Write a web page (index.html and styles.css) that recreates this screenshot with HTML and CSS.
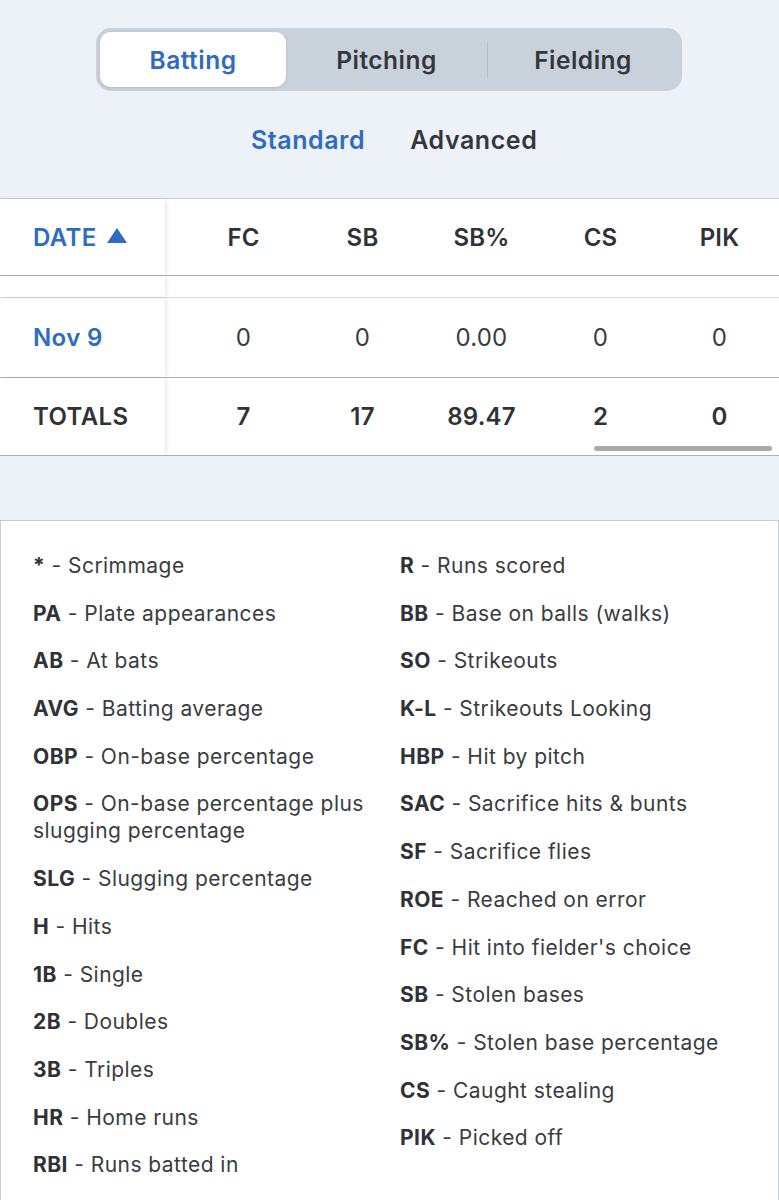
FILE: index.html
```html
<!DOCTYPE html>
<html>
<head>
<meta charset="utf-8">
<link rel="stylesheet" href="styles.css">
</head>
<body>
<div class="top">
  <div class="seg">
    <div class="seg-item active">Batting</div>
    <div class="seg-item">Pitching</div>
    <div class="seg-sep"></div>
    <div class="seg-item">Fielding</div>
  </div>
  <div class="subtabs">
    <span class="sub active">Standard</span>
    <span class="sub">Advanced</span>
  </div>
</div>

<div class="table">
  <div class="row head">
    <div class="c-date">DATE <span class="tri"></span></div>
    <div class="stats"><span>FC</span><span>SB</span><span>SB%</span><span>CS</span><span>PIK</span></div>
  </div>
  <div class="row spacer"><div class="c-date"></div><div class="stats"></div></div>
  <div class="row body">
    <div class="c-date link">Nov 9</div>
    <div class="stats"><span>0</span><span>0</span><span>0.00</span><span>0</span><span>0</span></div>
  </div>
  <div class="row total">
    <div class="c-date">TOTALS</div>
    <div class="stats"><span>7</span><span>17</span><span>89.47</span><span>2</span><span>0</span></div>
    <div class="scrollbar"></div>
  </div>
</div>

<div class="legend">
  <div class="col">
    <p><b>*</b> - Scrimmage</p>
    <p><b>PA</b> - Plate appearances</p>
    <p><b>AB</b> - At bats</p>
    <p><b>AVG</b> - Batting average</p>
    <p><b>OBP</b> - On-base percentage</p>
    <p><b>OPS</b> - On-base percentage plus slugging percentage</p>
    <p><b>SLG</b> - Slugging percentage</p>
    <p><b>H</b> - Hits</p>
    <p><b>1B</b> - Single</p>
    <p><b>2B</b> - Doubles</p>
    <p><b>3B</b> - Triples</p>
    <p><b>HR</b> - Home runs</p>
    <p><b>RBI</b> - Runs batted in</p>
  </div>
  <div class="col">
    <p><b>R</b> - Runs scored</p>
    <p><b>BB</b> - Base on balls (walks)</p>
    <p><b>SO</b> - Strikeouts</p>
    <p><b>K-L</b> - Strikeouts Looking</p>
    <p><b>HBP</b> - Hit by pitch</p>
    <p><b>SAC</b> - Sacrifice hits &amp; bunts</p>
    <p><b>SF</b> - Sacrifice flies</p>
    <p><b>ROE</b> - Reached on error</p>
    <p><b>FC</b> - Hit into fielder's choice</p>
    <p><b>SB</b> - Stolen bases</p>
    <p><b>SB%</b> - Stolen base percentage</p>
    <p><b>CS</b> - Caught stealing</p>
    <p><b>PIK</b> - Picked off</p>
  </div>
</div>
</body>
</html>
```
FILE: styles.css
```css
* { box-sizing: border-box; }
body {
  margin: 0;
  background: #edf2f9;
  font-family: Inter, "Noto Sans", sans-serif;
  color: #333538;
}
.top {
  padding-top: 28px;
  height: 198px;
}
.seg {
  width: 586px;
  height: 63px;
  margin-left: 96px;
  background: #c9d1db;
  border-radius: 15px;
  padding: 4px;
  display: flex;
  align-items: center;
}
.seg-item {
  width: 186px;
  height: 55px;
  display: flex;
  align-items: center;
  justify-content: center;
  font-size: 24.5px;
  font-weight: 600;
  color: #34373b;
  letter-spacing: 0.5px;
}
.seg-item.active {
  background: #fff;
  color: #2d6cc0;
  border-radius: 11px;
  box-shadow: 0 1px 3px rgba(0,0,0,0.12);
}
.seg-item:nth-child(2) { width: 201px; }
.seg-sep {
  width: 1px;
  height: 36px;
  background: #b4bcc6;
}
.seg-item:last-child { width: 190px; }
.subtabs {
  display: flex;
  margin-top: 34px;
  padding-left: 251px;
  gap: 45px;
}
.sub {
  font-size: 25px;
  font-weight: 600;
  color: #34373b;
  letter-spacing: 0.55px;
}
.sub.active { color: #2d6cc0; }

.table {
  background: #fff;
  border-top: 1px solid #c6ccd4;
  position: relative;
}
.row {
  display: flex;
  border-bottom: 1px solid #aab2bc;
}
.c-date {
  width: 165px;
  flex: none;
  padding-left: 33px;
  display: flex;
  align-items: center;
  font-size: 24px;
  font-weight: 500;
  letter-spacing: 0.4px;
  box-shadow: 2px 0 4px -1px rgba(120,130,145,0.25);
  position: relative;
  z-index: 1;
}
.stats {
  flex: 1;
  display: grid;
  grid-template-columns: repeat(5, 119px);
  padding-left: 184px;
  margin-left: -165px;
  align-items: center;
}
.stats span { text-align: center; font-size: 24px; letter-spacing: 0.2px; }
.head { height: 77px; }
.head .c-date { color: #2d6cc0; font-weight: 600; }
.head .stats span { font-weight: 600; color: #2f3236; }
.tri {
  width: 0; height: 0;
  border-left: 10px solid transparent;
  border-right: 10px solid transparent;
  border-bottom: 15px solid #2d6cc0;
  margin-left: 10px;
  margin-top: -3px;
}
.spacer { height: 22px; border-bottom-color: #d5dae1; }
.body { height: 80px; }
.body .stats span { font-weight: 400; color: #3a3c40; }
.link { color: #2d6cc0; font-weight: 600 !important; }
.total { height: 78px; }
.total .c-date { font-weight: 600; color: #2f3236; }
.total .stats span { font-weight: 600; color: #2f3236; }
.scrollbar {
  position: absolute;
  left: 594px;
  bottom: 5px;
  width: 178px;
  height: 5px;
  border-radius: 3px;
  background: #a9a9ab;
}

.legend {
  margin-top: 64px;
  background: #fff;
  border: 1px solid #c6ccd4;
  border-bottom: none;
  display: flex;
  padding: 31px 0 0 32px;
  min-height: 700px;
}
.col { width: 367px; }
.col:last-child { width: 370px; }
.col p {
  margin: 0 0 20.7px 0;
  font-size: 21px;
  line-height: 27px;
  color: #3a3c40;
  letter-spacing: 0.45px;
}
.col p b { font-weight: 700; color: #2f3236; }
.col:first-child p { padding-right: 2px; }
```
